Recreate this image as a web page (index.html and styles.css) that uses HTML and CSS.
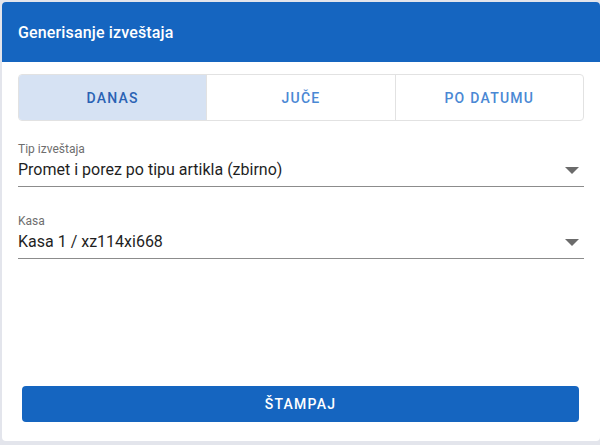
FILE: index.html
```html
<!DOCTYPE html>
<html>
<head>
<meta charset="utf-8">
<link rel="stylesheet" href="styles.css">
</head>
<body>
<div class="card">
  <div class="card-header">Generisanje izveštaja</div>
  <div class="card-body">
    <div class="tabs">
      <div class="tab active">DANAS</div>
      <div class="tab">JUČE</div>
      <div class="tab">PO DATUMU</div>
    </div>
    <div class="field first">
      <div class="field-label">Tip izveštaja</div>
      <div class="field-control">
        <span class="field-value">Promet i porez po tipu artikla (zbirno)</span>
        <svg class="arrow" width="14" height="7" viewBox="0 0 14 7"><path d="M0 0h14L7 7z" fill="#6b6b6b"/></svg>
      </div>
    </div>
    <div class="field">
      <div class="field-label">Kasa</div>
      <div class="field-control">
        <span class="field-value">Kasa 1 / xz114xi668</span>
        <svg class="arrow" width="14" height="7" viewBox="0 0 14 7"><path d="M0 0h14L7 7z" fill="#6b6b6b"/></svg>
      </div>
    </div>
  </div>
  <div class="card-actions">
    <button class="print-btn">ŠTAMPAJ</button>
  </div>
</div>
</body>
</html>
```
FILE: styles.css
```css
html, body {
  margin: 0;
  padding: 0;
}
body {
  background: #e3e5ec;
  padding: 2px 0 0 2px;
  font-family: Roboto, "Noto Sans", sans-serif;
  height: 445px;
  box-sizing: border-box;
  overflow: hidden;
}
.card {
  width: 598px;
  height: 439px;
  background: #fff;
  border-radius: 4px;
  overflow: hidden;
  display: flex;
  flex-direction: column;
}
.card-header {
  background: #1565c0;
  color: #fff;
  height: 60px;
  display: flex;
  align-items: center;
  padding-left: 16px;
  font-size: 16px;
  font-weight: 500;
  letter-spacing: 0.15px;
}
.card-body {
  flex: 1;
  padding: 12px 16px 0 16px;
}
.tabs {
  display: flex;
  height: 47px;
  border: 1px solid #e2e2e2;
  border-radius: 4px;
  overflow: hidden;
  box-sizing: border-box;
}
.tab {
  flex: 1;
  display: flex;
  align-items: center;
  justify-content: center;
  font-size: 14px;
  font-weight: 500;
  letter-spacing: 1.25px;
  color: #4a88d4;
  border-left: 1px solid #e2e2e2;
}
.tab:first-child {
  border-left: none;
}
.tab.active {
  background: #d6e2f3;
  color: #2a62b4;
}
.field {
  margin-top: 26px;
}
.field.first {
  margin-top: 20px;
}
.field-label {
  font-size: 12px;
  line-height: 16px;
  color: #6e6e6e;
}
.field-control {
  display: flex;
  align-items: center;
  justify-content: space-between;
  height: 24px;
  padding: 0 5px 5px 0;
  border-bottom: 1px solid #8c8c8c;
}
.field-value {
  font-size: 16px;
  color: #1f1f1f;
}
.arrow {
  display: block;
  margin-top: 2px;
}
.card-actions {
  padding: 0 21px 19px 20px;
}
.print-btn {
  display: block;
  width: 100%;
  height: 36px;
  border: none;
  border-radius: 4px;
  background: #1565c0;
  color: #fff;
  font-family: Roboto, "Noto Sans", sans-serif;
  font-size: 14px;
  font-weight: 500;
  letter-spacing: 1.25px;
  padding: 0;
}
```
